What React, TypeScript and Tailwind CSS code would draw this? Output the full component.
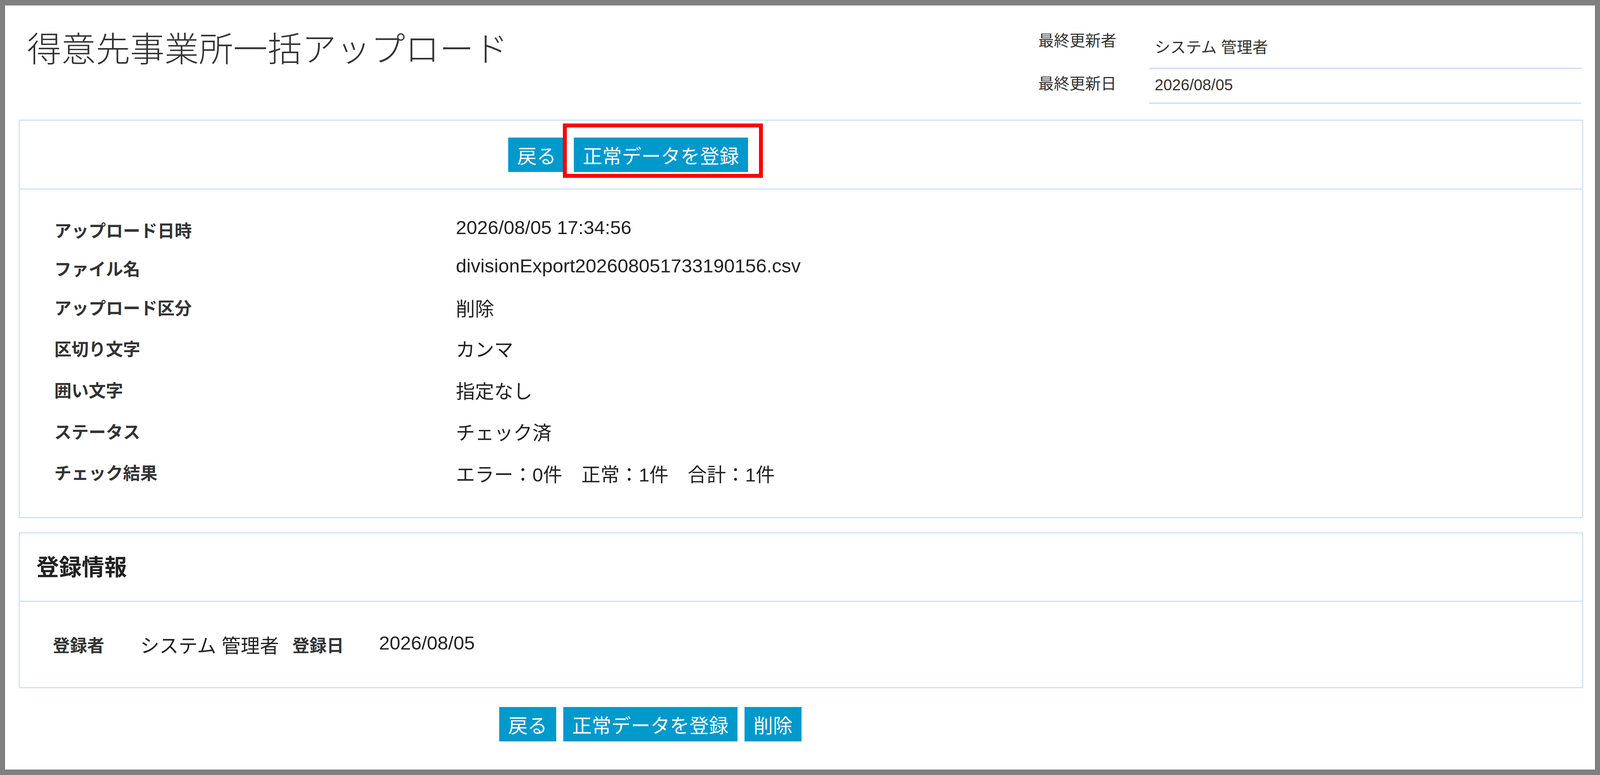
import React from "react";

const jp = "font-['Noto_Sans_CJK_JP',sans-serif]";

function Btn({ children }: { children: React.ReactNode }) {
  return (
    <button
      type="button"
      className="h-[88px] px-[23px] bg-[#0099cc] text-white text-[50px] leading-none font-['Noto_Sans_CJK_JP',sans-serif] flex items-center"
    >
      {children}
    </button>
  );
}

const rows: { label: string; value: string; h: string; v: string }[] = [
  { label: "アップロード日時", value: "2026/08/05 17:34:56", h: "h-[98px]", v: "pb-[12px]" },
  { label: "ファイル名", value: "divisionExport202608051733190156.csv", h: "h-[98px]", v: "pb-[12px]" },
  { label: "アップロード区分", value: "削除", h: "h-[102px]", v: "pt-[10px]" },
  { label: "区切り文字", value: "カンマ", h: "h-[107px]", v: "pt-[10px]" },
  { label: "囲い文字", value: "指定なし", h: "h-[106px]", v: "pt-[10px]" },
  { label: "ステータス", value: "チェック済", h: "h-[106px]", v: "pt-[10px]" },
  { label: "チェック結果", value: "エラー：0件　正常：1件　合計：1件", h: "h-[104px]", v: "pt-[14px]" },
];

export default function App() {
  return (
    <div className="w-full h-[1983px] overflow-hidden border-x-[13px] border-y-[14px] border-[#808080] bg-white text-[#222] font-['Liberation_Sans','Noto_Sans_CJK_JP',sans-serif]">
      {/* header */}
      <header className="flex justify-between items-start h-[292px]">
        <h1 className={`mt-[61px] ml-[56px] text-[88px] leading-none font-light text-[#333] ${jp}`}>
          得意先事業所一括アップロード
        </h1>
        <div className="mt-[63px] mr-[35px] grid grid-cols-[284px_1106px]">
          <div className={`h-[100px] pt-[4px] text-[40px] leading-none text-[#333] ${jp}`}>最終更新者</div>
          <div className="h-[100px] pt-[24px] pl-[14px] text-[40px] leading-none text-[#333] border-b-[4px] border-[#cfe2f6]">
            システム 管理者
          </div>
          <div className={`h-[89px] pt-[14px] text-[40px] leading-none text-[#333] ${jp}`}>最終更新日</div>
          <div className="h-[89px] pt-[20px] pl-[14px] text-[40px] leading-none text-[#333] border-b-[4px] border-[#cfe2f6]">
            2026/08/05
          </div>
        </div>
      </header>

      {/* upload info panel */}
      <section className="ml-[35px] mr-[30px] border-[3px] border-[#cfe2f6]">
        <div className="relative h-[176px] border-b-[3px] border-[#cfe2f6] flex items-center gap-[22px] pl-[1250px]">
          <Btn>戻る</Btn>
          <Btn>正常データを登録</Btn>
          <div className="absolute left-[1390px] top-[7px] w-[512px] h-[139px] border-[10px] border-[#ff0000] pointer-events-none" />
        </div>
        <div className="pt-[54px] pb-[63px] pl-[88px]">
          {rows.map((r) => (
            <div key={r.label} className={`flex items-center ${r.h}`}>
              <div className={`w-[1028px] shrink-0 text-[44px] leading-none font-bold text-[#333] ${jp}`}>{r.label}</div>
              <div className={`text-[49px] leading-none ${r.v}`}>{r.value}</div>
            </div>
          ))}
        </div>
      </section>

      {/* registration info panel */}
      <section className="mt-[36px] ml-[35px] mr-[30px] border-[3px] border-[#cfe2f6]">
        <div className={`h-[175px] border-b-[3px] border-[#cfe2f6] flex items-center pl-[42px] pb-[8px] text-[58px] leading-none font-bold text-[#222] ${jp}`}>
          登録情報
        </div>
        <div className="h-[218px] flex items-center pl-[84px]">
          <div className={`text-[44px] leading-none font-bold text-[#333] ${jp}`}>登録者</div>
          <div className="ml-[92px] text-[49px] leading-none pt-[8px]">システム 管理者</div>
          <div className={`ml-[34px] text-[44px] leading-none font-bold text-[#333] ${jp}`}>登録日</div>
          <div className="ml-[90px] text-[49px] leading-none pb-[8px]">2026/08/05</div>
        </div>
      </section>

      {/* bottom buttons */}
      <div className="mt-[48px] flex gap-[18px] pl-[1265px]">
        <Btn>戻る</Btn>
        <Btn>正常データを登録</Btn>
        <Btn>削除</Btn>
      </div>
    </div>
  );
}
